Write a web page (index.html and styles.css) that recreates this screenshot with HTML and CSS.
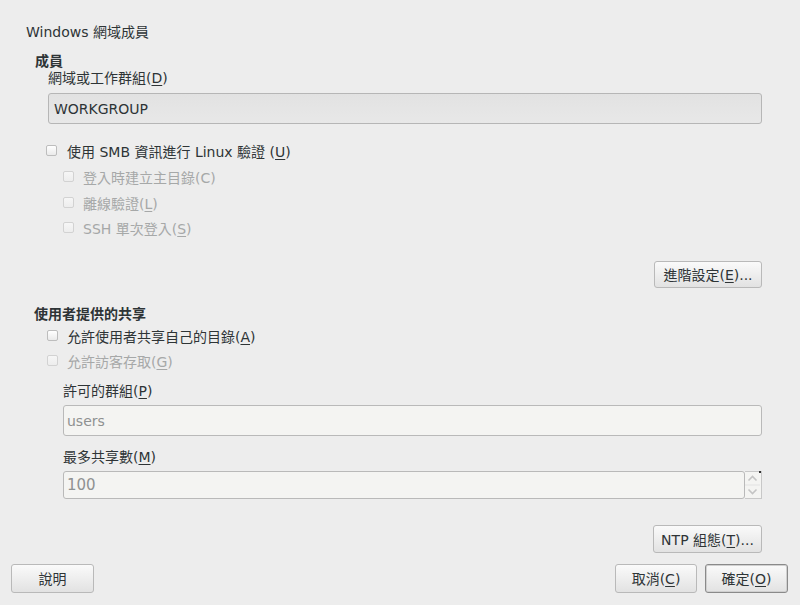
FILE: index.html
```html
<!DOCTYPE html>
<html>
<head>
<meta charset="utf-8">
<link rel="stylesheet" href="styles.css">
</head>
<body>
<div class="dlg">
  <div class="title">Windows 網域成員</div>
  <div class="heading h1">成員</div>
  <div class="label lbl-d">網域或工作群組(<u>D</u>)</div>
  <div class="entry entry-wg">WORKGROUP</div>
  <div class="check c-smb"><span class="box"></span><span class="txt">使用 SMB 資訊進行 Linux 驗證 (<u>U</u>)</span></div>
  <div class="check sub dis c-s1"><span class="box"></span><span class="txt">登入時建立主目錄(C)</span></div>
  <div class="check sub dis c-s2"><span class="box"></span><span class="txt">離線驗證(<u>L</u>)</span></div>
  <div class="check sub dis c-s3"><span class="box"></span><span class="txt">SSH 單次登入(<u>S</u>)</span></div>
  <div class="btnrow r-adv"><button class="btn b-adv">進階設定(<u>E</u>)...</button></div>
  <div class="heading h2">使用者提供的共享</div>
  <div class="check c-a"><span class="box"></span><span class="txt">允許使用者共享自己的目錄(<u>A</u>)</span></div>
  <div class="check dis c-g"><span class="box"></span><span class="txt">允許訪客存取(<u>G</u>)</span></div>
  <div class="label lbl-p">許可的群組(<u>P</u>)</div>
  <div class="entry entry-light entry-users">users</div>
  <div class="label lbl-m">最多共享數(<u>M</u>)</div>
  <div class="spin">
    <div class="entry entry-light entry-num">100</div>
    <div class="spinbtns">
      <svg width="17" height="28" viewBox="0 0 17 28">
        <path d="M4.5 9.5 L8.5 5.5 L12.5 9.5" fill="none" stroke="#c4c4c4" stroke-width="1.6"/>
        <path d="M4.5 18.5 L8.5 22.5 L12.5 18.5" fill="none" stroke="#c4c4c4" stroke-width="1.6"/>
        <line x1="1" y1="14" x2="16" y2="14" stroke="#e2e2e2" stroke-width="1"/>
        <rect x="15" y="0" width="2" height="2" fill="#333"/>
      </svg>
    </div>
  </div>
  <div class="btnrow r-ntp"><button class="btn b-ntp">NTP 組態(<u>T</u>)...</button></div>
  <div class="bottom">
    <button class="btn b-help">說明</button>
    <div class="right">
      <button class="btn b-cancel">取消(<u>C</u>)</button>
      <button class="btn b-ok">確定(<u>O</u>)</button>
    </div>
  </div>
</div>
</body>
</html>
```
FILE: styles.css
```css
html, body {
  margin: 0;
  padding: 0;
  background: #ededed;
}
body {
  width: 800px;
  height: 605px;
  overflow: hidden;
  font-family: "DejaVu Sans", "Noto Sans CJK TC", sans-serif;
  font-size: 14px;
  color: #2e3436;
}
u {
  text-decoration: underline;
  text-underline-offset: 2px;
  text-decoration-thickness: 1px;
}
.dlg {
  display: flex;
  flex-direction: column;
}
.title {
  margin-top: 22px;
  padding-left: 26px;
  line-height: 20px;
  height: 18px;
}
.heading {
  font-weight: bold;
  line-height: 18px;
  height: 16px;
}
.h1 { margin-top: 12px; padding-left: 35px; }
.label {
  line-height: 20px;
  height: 18px;
}
.lbl-d { padding-left: 48px; }
.entry {
  box-sizing: border-box;
  height: 31px;
  border: 1px solid #b6b6b6;
  border-radius: 3px;
  background: linear-gradient(#e2e2e2, #e8e8e8);
  padding-left: 6px;
  line-height: 30px;
  color: #2e3436;
}
.entry-wg {
  margin: 7px 0 0 48px;
  width: 714px;
  padding-left: 5px;
}
.check {
  display: flex;
  align-items: center;
  height: 18px;
}
.txt {
  line-height: 20px;
  height: 18px;
}
.box {
  box-sizing: border-box;
  width: 11px;
  height: 11px;
  border: 1px solid #bdbdbd;
  border-radius: 2px;
  background: linear-gradient(#ffffff, #eaeaea);
  margin-right: 10px;
  margin-top: -1px;
}
.dis { color: #a6a8a8; }
.dis .box { border-color: #d2d2d2; background: linear-gradient(#f6f6f6, #ededed); }
.c-smb { margin-top: 18px; padding-left: 46px; }
.sub { padding-left: 63px; }
.sub .box { margin-right: 9px; }
.c-s1 { margin-top: 8px; }
.c-s2 { margin-top: 8px; }
.c-s3 { margin-top: 7px; }
.btnrow {
  display: flex;
  justify-content: flex-end;
  padding-right: 38px;
}
.btn {
  box-sizing: border-box;
  font-family: inherit;
  font-size: 14px;
  color: #2e3436;
  border: 1px solid #b9b9b9;
  border-radius: 3px;
  background: linear-gradient(#fafafa, #e2e2e2);
  padding: 1px 0 0 0;
  margin: 0;
  line-height: 24px;
}
.r-adv { margin-top: 24px; }
.b-adv { width: 108px; height: 27px; }
.h2 { margin-top: 17px; padding-left: 34px; }
.c-a { margin-top: 6px; padding-left: 47px; }
.c-a .box, .c-g .box { margin-right: 9px; }
.c-g { margin-top: 7px; padding-left: 47px; }
.lbl-p { margin-top: 11px; padding-left: 63px; }
.entry-light {
  background: #f4f4f2;
  border-color: #b9b9b9;
  color: #8f9191;
  padding-left: 3px;
}
.entry-users {
  margin: 6px 0 0 63px;
  width: 699px;
}
.lbl-m { margin-top: 11px; padding-left: 63px; }
.spin {
  margin: 6px 0 0 63px;
  display: flex;
  height: 28px;
  width: 699px;
}
.entry-num {
  height: 28px;
  width: 682px;
  line-height: 27px;
  font-size: 15px;
}
.spinbtns {
  box-sizing: border-box;
  width: 17px;
  height: 28px;
  border: 1px solid #c8c8c8;
  border-left: none;
  background: #f4f4f2;
}
.spinbtns svg { display: block; margin-top: -1px; margin-left: -1px; }
.r-ntp { margin-top: 26px; }
.b-ntp { width: 109px; height: 28px; }
.bottom {
  margin-top: 11px;
  display: flex;
  justify-content: space-between;
  padding: 0 12px 0 11px;
}
.right { display: flex; gap: 8px; }
.b-help, .b-cancel, .b-ok { width: 83px; height: 29px; }
.b-cancel { width: 82px; }
.b-ok {
  border-color: #8a8a8a;
  box-shadow: inset 0 0 0 1px #d0d0d0;
}
```
